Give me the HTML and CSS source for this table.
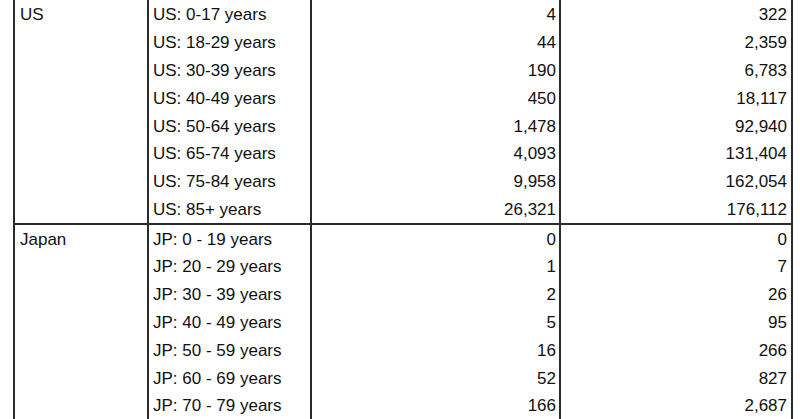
FILE: index.html
```html
<!DOCTYPE html>
<html>
<head>
<meta charset="utf-8">
<link rel="stylesheet" href="styles.css">
</head>
<body>
<div class="sheet">
  <div class="cell name"><div class="line">US</div></div>
  <div class="cell">
    <div class="line">US: 0-17 years</div>
    <div class="line">US: 18-29 years</div>
    <div class="line">US: 30-39 years</div>
    <div class="line">US: 40-49 years</div>
    <div class="line">US: 50-64 years</div>
    <div class="line">US: 65-74 years</div>
    <div class="line">US: 75-84 years</div>
    <div class="line">US: 85+ years</div>
  </div>
  <div class="cell num">
    <div class="line">4</div>
    <div class="line">44</div>
    <div class="line">190</div>
    <div class="line">450</div>
    <div class="line">1,478</div>
    <div class="line">4,093</div>
    <div class="line">9,958</div>
    <div class="line">26,321</div>
  </div>
  <div class="cell num last">
    <div class="line">322</div>
    <div class="line">2,359</div>
    <div class="line">6,783</div>
    <div class="line">18,117</div>
    <div class="line">92,940</div>
    <div class="line">131,404</div>
    <div class="line">162,054</div>
    <div class="line">176,112</div>
  </div>

  <div class="cell name"><div class="line">Japan</div></div>
  <div class="cell">
    <div class="line">JP: 0 - 19 years</div>
    <div class="line">JP: 20 - 29 years</div>
    <div class="line">JP: 30 - 39 years</div>
    <div class="line">JP: 40 - 49 years</div>
    <div class="line">JP: 50 - 59 years</div>
    <div class="line">JP: 60 - 69 years</div>
    <div class="line">JP: 70 - 79 years</div>
  </div>
  <div class="cell num">
    <div class="line">0</div>
    <div class="line">1</div>
    <div class="line">2</div>
    <div class="line">5</div>
    <div class="line">16</div>
    <div class="line">52</div>
    <div class="line">166</div>
  </div>
  <div class="cell num last">
    <div class="line">0</div>
    <div class="line">7</div>
    <div class="line">26</div>
    <div class="line">95</div>
    <div class="line">266</div>
    <div class="line">827</div>
    <div class="line">2,687</div>
  </div>
</div>
</body>
</html>
```

FILE: styles.css
```css
html, body {
  margin: 0;
  padding: 0;
  background: #ffffff;
}

body {
  overflow: hidden;
  height: 419px;
}

.sheet {
  display: grid;
  grid-template-columns: 132px 161px 247px 230px;
  gap: 2px;
  padding: 2px;
  width: max-content;
  margin: -1.7px 0 0 13px;
  background: #2b2b2b;
  font-family: "Liberation Sans", Arial, sans-serif;
  font-size: 17px;
  color: #111111;
}

.cell {
  background: #ffffff;
  padding: 0 3px 0 4px;
}

.name {
  padding-left: 5px;
}

.num {
  text-align: right;
  padding-right: 3px;
}

.num.last {
  padding-right: 4px;
}

.line {
  white-space: nowrap;
  line-height: 24.8px;
  padding-top: 3px;
}
```
